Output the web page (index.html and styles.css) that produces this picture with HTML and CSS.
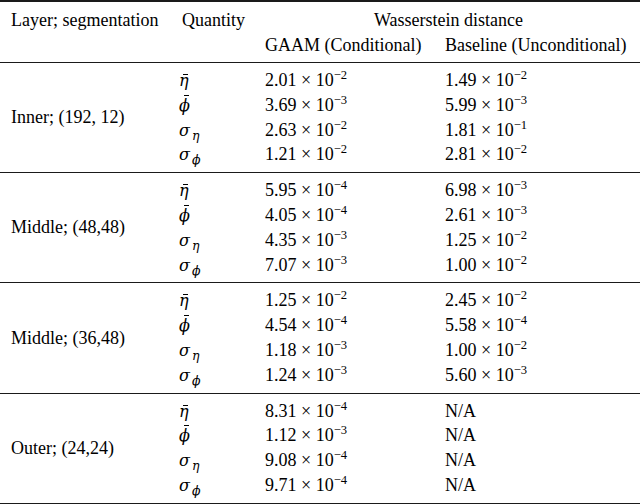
FILE: index.html
```html
<!DOCTYPE html>
<html>
<head>
<meta charset="utf-8">
<link rel="stylesheet" href="styles.css">
</head>
<body>
<div class="table">
  <div class="head">
    <div class="cell c1">Layer; segmentation</div>
    <div class="cell c2">Quantity</div>
    <div class="cell span">Wasserstein distance</div>
    <div class="cell c1"></div>
    <div class="cell c2"></div>
    <div class="cell c3">GAAM (Conditional)</div>
    <div class="cell c4">Baseline (Unconditional)</div>
  </div>

  <div class="group">
    <div class="cell label">Inner; (192, 12)</div>
    <div class="cell q"><span class="bar bar-eta"><i>η</i></span></div><div class="cell">2.01 × 10<sup>−2</sup></div><div class="cell">1.49 × 10<sup>−2</sup></div>
    <div class="cell q"><span class="bar bar-phi"><i>ϕ</i></span></div><div class="cell">3.69 × 10<sup>−3</sup></div><div class="cell">5.99 × 10<sup>−3</sup></div>
    <div class="cell q"><i>σ</i><sub><i>η</i></sub></div><div class="cell">2.63 × 10<sup>−2</sup></div><div class="cell">1.81 × 10<sup>−1</sup></div>
    <div class="cell q"><i>σ</i><sub><i>ϕ</i></sub></div><div class="cell">1.21 × 10<sup>−2</sup></div><div class="cell">2.81 × 10<sup>−2</sup></div>
  </div>

  <div class="group">
    <div class="cell label">Middle; (48,48)</div>
    <div class="cell q"><span class="bar bar-eta"><i>η</i></span></div><div class="cell">5.95 × 10<sup>−4</sup></div><div class="cell">6.98 × 10<sup>−3</sup></div>
    <div class="cell q"><span class="bar bar-phi"><i>ϕ</i></span></div><div class="cell">4.05 × 10<sup>−4</sup></div><div class="cell">2.61 × 10<sup>−3</sup></div>
    <div class="cell q"><i>σ</i><sub><i>η</i></sub></div><div class="cell">4.35 × 10<sup>−3</sup></div><div class="cell">1.25 × 10<sup>−2</sup></div>
    <div class="cell q"><i>σ</i><sub><i>ϕ</i></sub></div><div class="cell">7.07 × 10<sup>−3</sup></div><div class="cell">1.00 × 10<sup>−2</sup></div>
  </div>

  <div class="group">
    <div class="cell label">Middle; (36,48)</div>
    <div class="cell q"><span class="bar bar-eta"><i>η</i></span></div><div class="cell">1.25 × 10<sup>−2</sup></div><div class="cell">2.45 × 10<sup>−2</sup></div>
    <div class="cell q"><span class="bar bar-phi"><i>ϕ</i></span></div><div class="cell">4.54 × 10<sup>−4</sup></div><div class="cell">5.58 × 10<sup>−4</sup></div>
    <div class="cell q"><i>σ</i><sub><i>η</i></sub></div><div class="cell">1.18 × 10<sup>−3</sup></div><div class="cell">1.00 × 10<sup>−2</sup></div>
    <div class="cell q"><i>σ</i><sub><i>ϕ</i></sub></div><div class="cell">1.24 × 10<sup>−3</sup></div><div class="cell">5.60 × 10<sup>−3</sup></div>
  </div>

  <div class="group last">
    <div class="cell label">Outer; (24,24)</div>
    <div class="cell q"><span class="bar bar-eta"><i>η</i></span></div><div class="cell">8.31 × 10<sup>−4</sup></div><div class="cell">N/A</div>
    <div class="cell q"><span class="bar bar-phi"><i>ϕ</i></span></div><div class="cell">1.12 × 10<sup>−3</sup></div><div class="cell">N/A</div>
    <div class="cell q"><i>σ</i><sub><i>η</i></sub></div><div class="cell">9.08 × 10<sup>−4</sup></div><div class="cell">N/A</div>
    <div class="cell q"><i>σ</i><sub><i>ϕ</i></sub></div><div class="cell">9.71 × 10<sup>−4</sup></div><div class="cell">N/A</div>
  </div>
</div>
</body>
</html>
```

FILE: styles.css
```css
html, body {
  margin: 0;
  padding: 0;
  background: #fff;
}
body {
  font-family: "Liberation Serif", "DejaVu Serif", serif;
  font-size: 18px;
  color: #000;
  width: 640px;
  height: 504px;
  overflow: hidden;
}
.table {
  border-top: 2px solid #1a1a1a;
}
.head {
  display: grid;
  grid-template-columns: 172px 83px 180px 1fr;
  grid-auto-rows: 25px;
  line-height: 25px;
  padding: 6px 0 4px;
  border-bottom: 1px solid #1a1a1a;
}
.group {
  display: grid;
  grid-template-columns: 172px 83px 180px 1fr;
  grid-template-rows: repeat(4, 24.8px);
  line-height: 24.8px;
  padding: 5px 0 5px;
}
.group + .group {
  border-top: 1px solid #1a1a1a;
}
.group.last {
  border-bottom: 2px solid #1a1a1a;
}
.cell {
  padding-left: 10px;
  white-space: nowrap;
}
.c1, .label {
  padding-left: 11px;
}
.span {
  grid-column: 3 / 5;
  text-align: center;
  padding-right: 8px;
}
.label {
  grid-column: 1;
  grid-row: 1 / 5;
  align-self: center;
}
.q {
  padding-left: 7px;
}
.q i {
  font-family: "DejaVu Serif", "Liberation Serif", serif;
  font-style: italic;
  font-size: 16px;
}
.q sub i {
  font-size: 12.5px;
}
.bar {
  position: relative;
  display: inline-block;
}
.bar::before {
  content: "";
  position: absolute;
  left: 4px;
  width: 5px;
  border-top: 1px solid #000;
}
.bar-eta::before {
  top: 6px;
}
.bar-phi::before {
  top: 2px;
  left: 5px;
}
sup {
  font-size: 0.7em;
  line-height: 0;
  vertical-align: 7px;
}
sub {
  font-size: 0.7em;
  line-height: 0;
  vertical-align: -4px;
  margin-left: 2px;
}
```
